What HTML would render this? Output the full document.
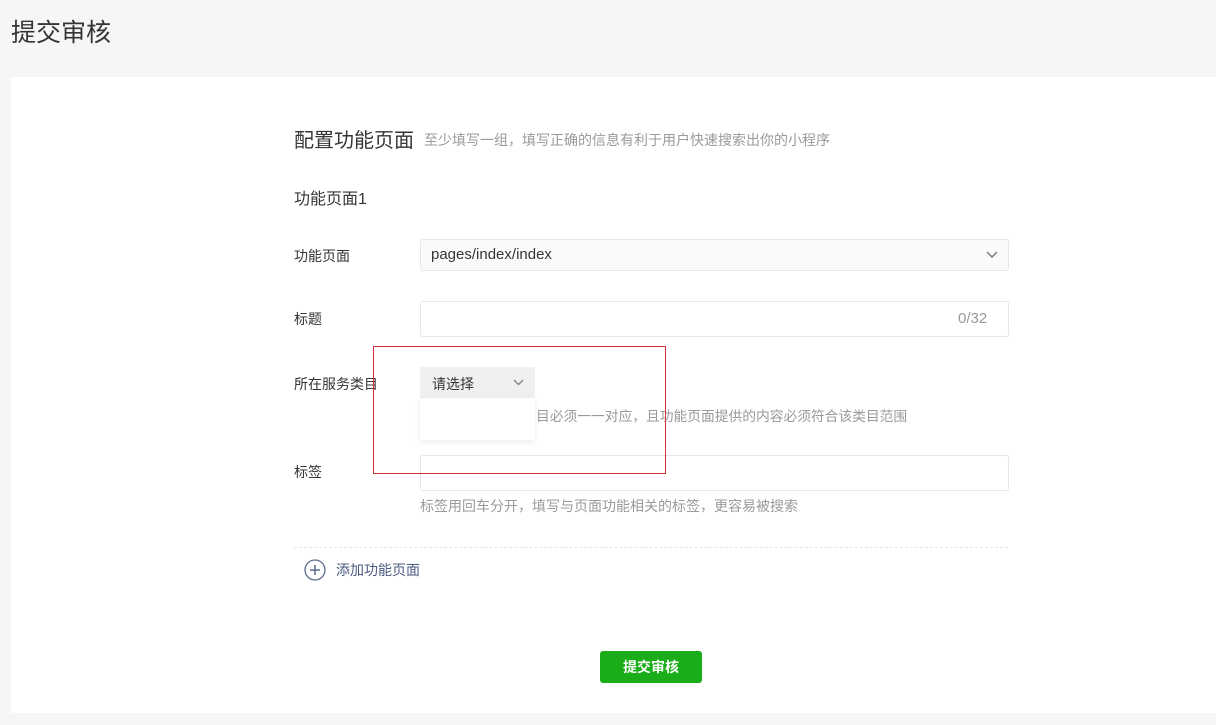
<!DOCTYPE html>
<html><head><meta charset="utf-8"><style>
body{margin:0;width:1216px;height:725px;background:#f5f6f8;font-family:"Liberation Sans","Noto Sans CJK SC",sans-serif;position:relative;overflow:hidden;color:#353535}
.a{position:absolute;white-space:nowrap}
.card{position:absolute;left:11px;top:77px;width:1205px;height:636px;background:#fff}
.lbl{font-size:14px;color:#353535}
.inp{position:absolute;left:420px;width:587px;border:1px solid #e4e6ea;border-radius:3px;background:#fff}
.tip{font-size:14px;color:#9a9a9a}
</style></head><body>
<div class="a" style="left:11px;top:13px;font-size:25px;color:#353535">提交审核</div>
<div class="card"></div>
<div class="a" style="left:294px;top:124px;font-size:20px">配置功能页面</div>
<div class="a tip" style="left:424px;top:130px;font-size:14px">至少填写一组，填写正确的信息有利于用户快速搜索出你的小程序</div>
<div class="a" style="left:294px;top:185px;font-size:16px">功能页面1</div>
<div class="a lbl" style="left:294px;top:246px">功能页面</div>
<div class="inp" style="top:239px;height:30px;background:#fafafa"></div>
<div class="a" style="left:431px;top:246px;font-size:15px">pages/index/index</div>
<svg class="a" style="left:986px;top:251px" width="12" height="8"><path d="M1 1l5 5 5-5" fill="none" stroke="#777" stroke-width="1.4"/></svg>
<div class="a lbl" style="left:294px;top:309px">标题</div>
<div class="inp" style="top:301px;height:34px"></div>
<div class="a" style="left:958px;top:310px;font-size:15px;color:#9a9a9a">0/32</div>
<div class="a lbl" style="left:294px;top:374px">所在服务类目</div>
<div class="a" style="left:420px;top:367px;width:115px;height:31px;background:#eff0f2;border-radius:2px 2px 0 0"></div>
<div class="a" style="left:432px;top:374px;font-size:14px">请选择</div>
<svg class="a" style="left:513px;top:379px" width="11" height="8"><path d="M1 1l4.5 4.5L10 1" fill="none" stroke="#888" stroke-width="1.4"/></svg>
<div class="a" style="left:420px;top:398px;width:115px;height:42px;background:#fff;box-shadow:0 2px 6px rgba(0,0,0,.08)"></div>
<div class="a tip" style="left:536px;top:405px;font-size:13.8px;letter-spacing:-0.05px">目必须一一对应，且功能页面提供的内容必须符合该类目范围</div>
<div class="a lbl" style="left:294px;top:462px">标签</div>
<div class="inp" style="top:455px;height:34px"></div>
<div class="a tip" style="left:420px;top:496px">标签用回车分开，填写与页面功能相关的标签，更容易被搜索</div>
<div class="a" style="left:294px;top:547px;width:714px;border-top:1px dashed #e4e6ea"></div>
<svg class="a" style="left:304px;top:559px" width="22" height="22"><circle cx="11" cy="11" r="10" fill="none" stroke="#5a6a8a" stroke-width="1.3"/><path d="M11 6v10M6 11h10" stroke="#5a6a8a" stroke-width="1.5"/></svg>
<div class="a" style="left:336px;top:560px;font-size:14px;color:#4a5a80">添加功能页面</div>
<div class="a" style="left:600px;top:651px;width:102px;height:32px;background:#1aad19;border-radius:3px;color:#fff;font-size:14px;font-weight:bold;text-align:center;line-height:32px">提交审核</div>
<div class="a" style="left:373px;top:346px;width:291px;height:126px;border:1px solid #d3303a;z-index:5"></div>
</body></html>
